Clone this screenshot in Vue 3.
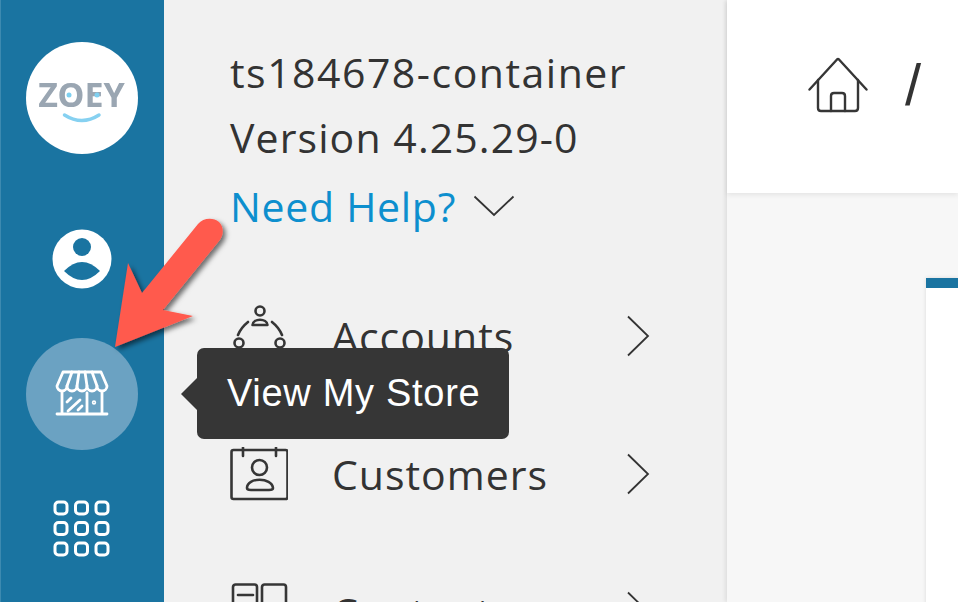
<template>
  <div class="page">
    <!-- left icon rail -->
    <aside class="rail">
      <div class="logo">
        <svg width="112" height="112" viewBox="0 0 112 112">
          <text x="55.500" y="65" text-anchor="middle" class="logo-text">ZOEY</text>
          <circle cx="43" cy="53" r="2.500" fill="#7fd0f0" />
          <circle cx="71" cy="53" r="2.500" fill="#7fd0f0" />
          <path d="M38.500 73 Q56 84 73 73" fill="none" stroke="#86d1f1" stroke-width="3.500" stroke-linecap="round" />
        </svg>
      </div>

      <svg class="user-icon" width="60" height="60" viewBox="0 0 60 60">
        <circle cx="30" cy="30" r="29.500" fill="#fff" />
        <circle cx="30" cy="18" r="9" fill="#1a74a1" />
        <path d="M12 42Q30 24 48 42Q30 60 12 42Z" fill="#1a74a1" />
      </svg>

      <div class="store-btn">
        <svg width="56" height="50" viewBox="0 0 56 50" fill="none" stroke="#fff" stroke-width="2.800" stroke-linecap="round" stroke-linejoin="round">
          <path d="M9 3H47L53 17A5 5 0 0 1 43 17A5 5 0 0 1 33 17A5 5 0 0 1 23 17A5 5 0 0 1 13 17A5 5 0 0 1 3 17Z" />
          <path d="M18 3L13 17M25 3L23 17M31 3L33 17M38 3L43 17" />
          <path d="M8 23V45M48 23V45M3 45H53M33 24V45" />
          <path d="M13 33L17 29M14 42L26 31M24 41L28 37" />
          <circle cx="40" cy="33.500" r="0.800" />
        </svg>
      </div>

      <svg class="grid-icon" width="58" height="58" viewBox="0 0 58 58" fill="none" stroke="#fff" stroke-width="3">
        <template v-for="row in [0, 1, 2]" :key="row">
          <rect v-for="col in [0, 1, 2]" :key="col" :x="2 + col * 20.500" :y="2 + row * 20.500" width="12" height="12" rx="3.500" />
        </template>
      </svg>
    </aside>

    <!-- account panel -->
    <section class="panel">
      <div class="store-name">ts184678-container</div>
      <div class="version">Version 4.25.29-0</div>
      <div class="help">
        <span>Need Help?</span>
        <svg width="42" height="22" viewBox="0 0 42 22" fill="none" stroke="#333" stroke-width="1.800">
          <path d="M1.500 1.500L21 20L40.500 1.500" />
        </svg>
      </div>

      <nav class="menu">
        <div class="menu-row">
          <svg class="menu-icon icon-accounts" width="58" height="50" viewBox="0 0 58 50" fill="none" stroke="#363636" stroke-width="2.600" stroke-linecap="round" stroke-linejoin="round">
            <circle cx="30" cy="7" r="4.500" />
            <path d="M22.500 21C23 14 37 14 37.500 21Z" />
            <path d="M18 18C13 22 10 26 8 31M42 18C47 22 50 26 52 31" />
            <circle cx="9" cy="39" r="4.500" />
            <circle cx="50" cy="39" r="4.500" />
          </svg>
          <span class="menu-label">Accounts</span>
          <svg class="chev" width="24" height="42" viewBox="0 0 24 42" fill="none" stroke="#333" stroke-width="1.800">
            <path d="M2 1.500L22 21L2 40.500" />
          </svg>
        </div>
        <div class="menu-row">
          <svg class="menu-icon" width="58" height="54" viewBox="0 0 58 54" fill="none" stroke="#363636" stroke-width="2.600" stroke-linecap="round" stroke-linejoin="round">
            <rect x="1.500" y="3" width="56" height="49" rx="2" />
            <path d="M13 0.500V9M46 0.500V9" />
            <circle cx="29.500" cy="20.500" r="7.500" />
            <path d="M17 41C17 30 42 30 43 41C43 43 41 43 39 43H21C19 43 17 43 17 41Z" />
          </svg>
          <span class="menu-label">Customers</span>
          <svg class="chev" width="24" height="42" viewBox="0 0 24 42" fill="none" stroke="#333" stroke-width="1.800">
            <path d="M2 1.500L22 21L2 40.500" />
          </svg>
        </div>
        <div class="menu-row">
          <svg class="menu-icon" width="58" height="58" viewBox="0 0 58 58" fill="none" stroke="#363636" stroke-width="2.600" stroke-linecap="round" stroke-linejoin="round">
            <rect x="3" y="1.500" width="24" height="54" rx="2.500" />
            <rect x="32" y="1.500" width="24" height="54" rx="2.500" />
            <path d="M8 12H23" />
          </svg>
          <span class="menu-label">Content</span>
          <svg class="chev" width="24" height="42" viewBox="0 0 24 42" fill="none" stroke="#333" stroke-width="1.800">
            <path d="M2 1.500L22 21L2 40.500" />
          </svg>
        </div>
      </nav>
    </section>

    <!-- main area -->
    <main class="main">
      <header class="topbar">
        <svg width="60" height="56" viewBox="0 0 60 56" fill="none" stroke="#363636" stroke-width="2.400" stroke-linecap="round" stroke-linejoin="round">
          <path d="M1.500 32.500L29 2.500C29.600 2 30.400 2 31 2.500L58.500 32.500" />
          <path d="M10 23V51C10 53 11 54 13 54H47C49 54 50 53 50 51V23" />
          <path d="M23 54V39C23 37 24 36 26 36H34C36 36 37 37 37 39V54" />
        </svg>
        <span class="crumb-sep">/</span>
      </header>
      <div class="content">
        <div class="card"></div>
      </div>
    </main>

    <!-- callout arrow and tooltip sit on top of everything -->
    <svg class="arrow" width="958" height="602" viewBox="0 0 958 602">
      <defs>
        <filter id="arrow-shadow" x="-20%" y="-20%" width="150%" height="150%">
          <feDropShadow dx="3" dy="3" stdDeviation="2.500" flood-color="#000" flood-opacity="0.550" />
        </filter>
      </defs>
      <path d="M115 347L128 263L142 293L198 224C203 218 213 217 219 222C224 227 224 235 219 241L163 310L193 316Z" fill="#ff5a4d" filter="url(#arrow-shadow)" />
    </svg>

    <div class="tooltip">View My Store</div>
  </div>
</template>

<script setup>
</script>

<style>
html,
body {
  margin: 0;
  overflow: hidden;
}
</style>

<style scoped>
.page {
  position: relative;
  display: flex;
  width: 958px;
  height: 602px;
  overflow: hidden;
  font-family: "Open Sans", "Noto Sans", sans-serif;
  color: #333;
}

.rail {
  flex: none;
  box-sizing: border-box;
  width: 164px;
  padding-top: 42px;
  background: #1a74a1;
  border-left: 1px solid #3d8ab0;
  display: flex;
  flex-direction: column;
  align-items: center;
}

.logo {
  width: 112px;
  height: 112px;
  margin-left: -1px;
  border-radius: 50%;
  background: #fff;
}

.logo-text {
  font-family: "Noto Sans", sans-serif;
  font-size: 34px;
  font-weight: 700;
  fill: #9aa6b2;
  filter: blur(0.5px);
}

.user-icon {
  margin-top: 75px;
  margin-left: -1px;
}

.store-btn {
  width: 112px;
  height: 112px;
  margin-top: 49px;
  margin-left: -1px;
  border-radius: 50%;
  background: #6ba2c2;
  display: flex;
  align-items: center;
  justify-content: center;
}

.grid-icon {
  margin-top: 50px;
  margin-left: -1px;
}

.panel {
  flex: none;
  box-sizing: border-box;
  width: 563px;
  padding: 46px 0 0 66px;
  background: #f1f1f1;
  font-size: 41px;
}

.store-name {
  height: 52px;
  line-height: 52px;
  font-weight: 500;
  letter-spacing: 1.5px;
}

.version {
  height: 66px;
  line-height: 66px;
  margin-top: 6px;
  letter-spacing: 1.1px;
}

.help {
  display: flex;
  align-items: center;
  gap: 17px;
  height: 72px;
  color: #0d8fce;
  letter-spacing: 0.7px;
}

.menu {
  margin-top: 65px;
  display: flex;
  flex-direction: column;
  gap: 80px;
}

.menu-row {
  display: flex;
  align-items: center;
  height: 58px;
}

.menu-icon {
  flex: none;
  width: 58px;
}

.icon-accounts {
  align-self: flex-start;
  margin-top: -3px;
}

.menu-label {
  margin-left: 44px;
  width: 294px;
  letter-spacing: 1px;
}

.main {
  flex: 1;
  display: flex;
  flex-direction: column;
  min-width: 0;
  box-shadow: -2px 0 4px rgba(0, 0, 0, 0.08);
}

.topbar {
  flex: none;
  box-sizing: border-box;
  height: 193px;
  padding: 0 0 24px 81px;
  background: #fff;
  display: flex;
  align-items: center;
  gap: 37px;
  box-shadow: 0 2px 5px rgba(0, 0, 0, 0.08);
  position: relative;
}

.crumb-sep {
  font-size: 58px;
  font-family: "Liberation Sans", sans-serif;
  color: #333;
}

.content {
  flex: 1;
  background: #f7f7f7;
  padding: 85px 0 0 199px;
}

.card {
  height: 400px;
  background: #fff;
  border-top: 10px solid #1a74a1;
  box-shadow: 0 0 4px rgba(0, 0, 0, 0.12);
}

.arrow {
  position: absolute;
  top: 0;
  left: 0;
  pointer-events: none;
}

.tooltip {
  position: absolute;
  left: 197px;
  top: 348px;
  box-sizing: border-box;
  width: 312px;
  height: 91px;
  padding-left: 30px;
  line-height: 90px;
  border-radius: 7px;
  background: #363636;
  color: #fff;
  font-family: "Liberation Sans", sans-serif;
  font-size: 38px;
  letter-spacing: 0.7px;
  white-space: nowrap;
}

.tooltip::before {
  content: "";
  position: absolute;
  left: -16px;
  top: 30px;
  border-style: solid;
  border-width: 16px 16px 16px 0;
  border-color: transparent #363636 transparent transparent;
}
</style>
